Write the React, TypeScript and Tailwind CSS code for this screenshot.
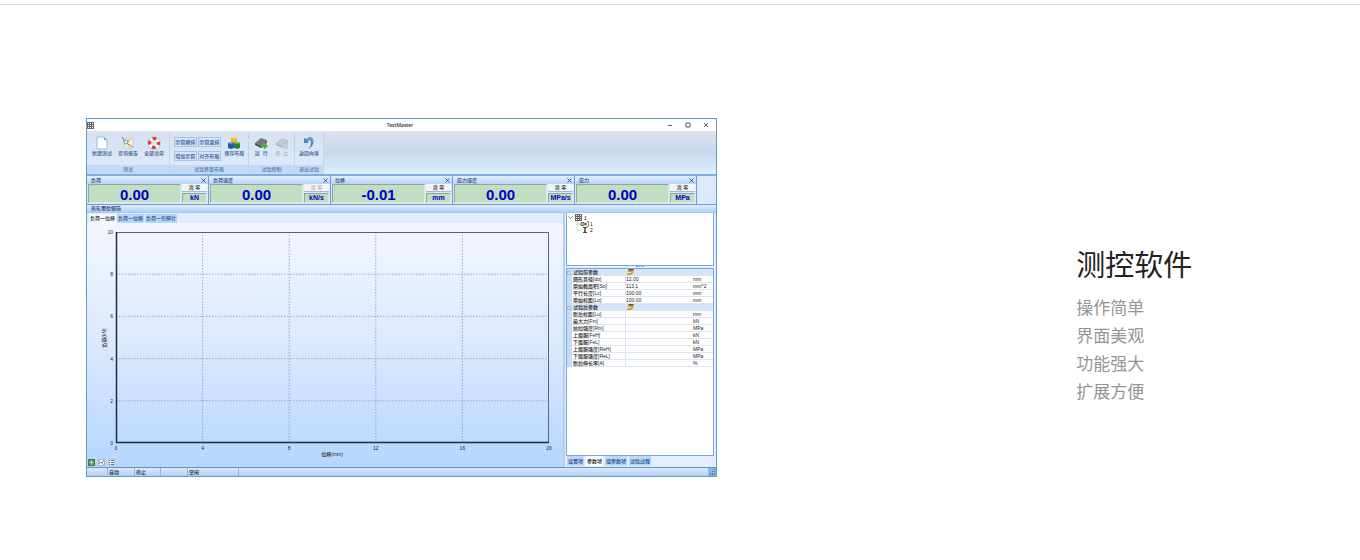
import { useState } from 'react';
import type { ReactNode } from 'react';

const gauges = [
  { name: '负荷', value: '0.00', unit: 'kN' },
  { name: '负荷速度', value: '0.00', unit: 'kN/s', disabled: true },
  { name: '位移', value: '-0.01', unit: 'mm' },
  { name: '应力速度', value: '0.00', unit: 'MPa/s' },
  { name: '应力', value: '0.00', unit: 'MPa' },
];

const paramRows = [
  { label: '试验前参数', group: true },
  { label: '圆形直径[do]', value: '12.00', unit: 'mm' },
  { label: '原始截面积[So]', value: '113.1', unit: 'mm^2' },
  { label: '平行长度[Lc]', value: '100.00', unit: 'mm' },
  { label: '原始标距[Lo]', value: '100.00', unit: 'mm' },
  { label: '试验后参数', group: true },
  { label: '断后标距[Lu]', unit: 'mm' },
  { label: '最大力[Fm]', unit: 'kN' },
  { label: '抗拉强度[Rm]', unit: 'MPa' },
  { label: '上屈服[FeH]', unit: 'kN' },
  { label: '下屈服[FeL]', unit: 'kN' },
  { label: '上屈服强度[ReH]', unit: 'MPa' },
  { label: '下屈服强度[ReL]', unit: 'MPa' },
  { label: '断后伸长率[A]', unit: '%' },
];

const chartTabs = ['负荷一位移', '负荷一位移', '负荷一引伸计'];
const paramTabs = ['设置项', '参数项', '组参数项', '试验过程'];
const features = ['操作简单', '界面美观', '功能强大', '扩展方便'];

const GridIcon = () => (
  <svg viewBox="0 0 7 7" className="h-[7px] w-[7px]">
    <rect width="7" height="7" fill="#666" />
    <path d="M1 1h1v1H1zM3 1h1v1H3zM5 1h1v1H5zM1 3h1v1H1zM3 3h1v1H3zM5 3h1v1H5zM1 5h1v1H1zM3 5h1v1H3zM5 5h1v1H5z" fill="#eee" />
  </svg>
);

const NewIcon = () => (
  <svg viewBox="0 0 14 14" className="h-3.5 w-3.5">
    <path d="M2 1h7l3 3v9H2z" fill="#fbfdff" stroke="#8fabd0" strokeWidth=".8" />
    <path d="M9 1v3h3z" fill="#75a5dc" />
  </svg>
);

const ReportIcon = () => (
  <svg viewBox="0 0 14 14" className="h-3.5 w-3.5">
    <path d="M3 2.5l9-1v11l-8 .5z" fill="#f7f7f2" stroke="#b8b8b0" strokeWidth=".6" />
    <path d="M1 1l4 3 7-2-5 5z" fill="#e5c76b" />
    <path d="M1 1l3 5M5 7l7 4" stroke="#626873" strokeWidth=".8" />
    <circle cx="5" cy="6" r="2" fill="#dbe7f1" stroke="#777" strokeWidth=".7" />
    <path d="M7 9h3M6 11h4" stroke="#d9a43a" strokeWidth=".8" />
  </svg>
);

const RingIcon = () => (
  <svg viewBox="0 0 14 14" className="h-3.5 w-3.5">
    <circle cx="7" cy="7" r="4.5" fill="none" stroke="#fff" strokeWidth="3.2" />
    <circle cx="7" cy="7" r="4.5" fill="none" stroke="#d8392c" strokeWidth="3.2" strokeDasharray="3.9 3.17" strokeDashoffset="1.95" />
    <circle cx="7" cy="7" r="6.2" fill="none" stroke="#c98f90" strokeWidth=".5" />
  </svg>
);

const CubesIcon = () => (
  <svg viewBox="0 0 14 14" className="h-3.5 w-3.5">
    <path d="M4 2l3-1 3 1v4L7 7 4 6z" fill="#e8b91f" />
    <path d="M4 2l3-1 3 1-3 1z" fill="#ffe16c" />
    <path d="M1 7l3-1 3 1v5l-3 1-3-1z" fill="#2359b5" />
    <path d="M1 7l3-1 3 1-3 1z" fill="#6da5eb" />
    <path d="M7 7l3-1 3 1v5l-3 1-3-1z" fill="#278739" />
    <path d="M7 7l3-1 3 1-3 1z" fill="#75c46a" />
  </svg>
);

const RunIcon = () => (
  <svg viewBox="0 0 14 14" className="h-3.5 w-3.5">
    <path d="M1 7l6-5 6 2-6 6z" fill="#777" />
    <path d="M1 7l6 3v2L1 9z" fill="#444" />
    <path d="M7 10l6-6v3l-6 5z" fill="#5d5d5d" />
    <path d="M7 8h3v-2l4 4-4 3.500v-2H7z" fill="#4bae3f" />
  </svg>
);

const StopIcon = () => (
  <svg viewBox="0 0 14 14" className="h-3.5 w-3.5">
    <path d="M1 7l6-5 6 2-6 6z" fill="#bfc8d4" />
    <path d="M1 7l6 3v2L1 9z" fill="#a9b4c3" />
    <path d="M7 10l6-6v3l-6 5z" fill="#b3bdca" />
    <path d="M8 8h5v5H8z" fill="#c6ced9" />
  </svg>
);

const BackIcon = () => (
  <svg viewBox="0 0 14 14" className="h-3.5 w-3.5">
    <path d="M4 3c4-3 8-2 7.500 3-.3 3-2 5-5 7 1.500-2.500 3-5 2.500-7.500-.4-1.600-2-1.500-3.500 0L7 7H2V2z" fill="#4a82c4" />
    <path d="M4.500 3.800c3-2.300 6-2 6 2" fill="none" stroke="#a7caee" strokeWidth=".7" />
  </svg>
);

const HandIcon = () => (
  <svg viewBox="0 0 8 6" className="block h-1.5 w-2">
    <path d="M2.500 0h5v3L5.500 6H1V2.500h1.500z" fill="#c9a545" />
    <path d="M2.500 0h5v1.500h-5z" fill="#5f5638" />
    <path d="M1 3h4v1H1z" fill="#fff0a5" />
  </svg>
);

const RibbonButton = ({ icon, label, disabled }: { icon: ReactNode; label: string; disabled?: boolean }) => (
  <button
    disabled={disabled}
    className="flex flex-col items-center whitespace-pre pt-[3px] text-[#3c5e95] disabled:text-[#a3afc1]"
  >
    {icon}
    <span>{label}</span>
  </button>
);

const RibbonGroup = ({ title, width, children }: { title: string; width: string; children: ReactNode }) => (
  <div className={`flex shrink-0 flex-col border-r border-[#c4d4e8] bg-gradient-to-b from-[#d6e2f2] to-[#dcebfa] ${width}`}>
    <div className="flex h-8 items-start justify-around px-0.5">{children}</div>
    <div className="h-[9px] bg-[#c3daf4] text-center leading-[9px] text-[#5279b2]">{title}</div>
  </div>
);

const SmallButton = ({ label }: { label: string }) => (
  <button className="h-[10px] w-[23px] whitespace-nowrap border border-[#a8c2e3] bg-[#d4e4f7] leading-[8px] text-[#2d5396]">
    {label}
  </button>
);

const Gauge = ({ name, value, unit, disabled }: { name: string; value: string; unit: string; disabled?: boolean }) => (
  <div className="border-r border-[#6e9dcc]">
    <div className="flex h-2 items-center justify-between bg-gradient-to-b from-[#e2efff] to-[#b5d4fb] pl-1 pr-0.5 text-[#243f72]">
      <span>{name}</span>
      <button aria-label={`关闭 ${name}`}>
        <svg viewBox="0 0 5 5" className="h-[5px] w-[5px]">
          <path d="M.5 .5l4 4M4.500 .5l-4 4" stroke="#243b6b" strokeWidth=".8" />
        </svg>
      </button>
    </div>
    <div className="flex h-5 gap-px bg-[#dce9f9] px-px pb-px">
      <div className="h-[19px] flex-1 border border-b-[#dfe8e2] border-l-[#8fa79b] border-r-[#dfe8e2] border-t-[#8fa79b] bg-[#c0dec0] text-center text-[15px] font-bold leading-[19px] text-[#0000c8]">
        {value}
      </div>
      <div className="flex w-[25px] flex-col gap-px">
        <button
          disabled={disabled}
          className="h-2 whitespace-pre border-b border-[#aab8c8] bg-[#f2f5f8] leading-[7px] text-[#222] disabled:text-[#aaa]"
        >
          清 零
        </button>
        <div className="h-[10px] border border-b-[#dfe8e2] border-l-[#8fa79b] border-r-[#dfe8e2] border-t-[#8fa79b] bg-[#c0dec0] text-center text-[7px] font-bold leading-[8px] text-[#0000c8]">
          {unit}
        </div>
      </div>
    </div>
  </div>
);

const Chart = () => {
  const x = (v: number) => 29 + (v / 20) * 433;
  const y = (v: number) => 220 - (v / 10) * 211;
  return (
    <svg viewBox="0 0 476 236" className="block w-full" fill="#222" fontSize="5">
      {[4, 8, 12, 16].map((v) => (
        <line key={v} x1={x(v)} x2={x(v)} y1="9" y2="220" stroke="#8e99ab" strokeWidth=".8" strokeDasharray="1.500 1.500" />
      ))}
      {[2, 4, 6, 8].map((v) => (
        <line key={v} x1="29" x2="462" y1={y(v)} y2={y(v)} stroke="#8e99ab" strokeWidth=".8" strokeDasharray="1.500 1.500" />
      ))}
      <path d="M29 9.500H461.500V220" fill="none" stroke="#596273" />
      <path d="M29.500 9V219.500H462" fill="none" stroke="#222b3a" strokeWidth="1.500" />
      {[0, 4, 8, 12, 16, 20].map((v) => (
        <text key={v} x={x(v)} y="227" textAnchor="middle">
          {v}
        </text>
      ))}
      {[0, 2, 4, 6, 8, 10].map((v) => (
        <text key={v} x="26" y={y(v) + 2} textAnchor="end">
          {v}
        </text>
      ))}
      <text x="245" y="233" textAnchor="middle">
        位移(mm)
      </text>
      <text transform="translate(19 115) rotate(-90)" textAnchor="middle">
        负荷(kN)
      </text>
    </svg>
  );
};

const ParamTable = () => (
  <table className="w-full table-fixed border-separate border-spacing-0 text-left">
    <colgroup>
      <col className="w-[5px]" />
      <col className="w-[53px]" />
      <col />
      <col className="w-5" />
    </colgroup>
    <tbody>
      {paramRows.map((row) => (
        <tr key={row.label} className={row.group ? 'h-[7px] bg-[#d3e5fa]' : 'h-[7px]'}>
          <td className="bg-[#c6dcf6] p-0">
            {row.group && (
              <svg viewBox="0 0 4 4" className="block h-1 w-1">
                <path d="M.5 .5h3v3h-3zM1 2h2" fill="#fff" stroke="#7898c0" strokeWidth=".6" />
              </svg>
            )}
          </td>
          <th className="whitespace-nowrap border-b border-[#dde6f0] p-0 pl-px font-medium leading-[6px] text-[#222]">
            {row.label}
          </th>
          <td className="border-b border-l border-[#dde6f0] p-0 leading-[6px]">
            {row.group ? <HandIcon /> : row.value}
          </td>
          <td className="whitespace-nowrap border-b border-[#dde6f0] p-0 leading-[6px]">{row.unit}</td>
        </tr>
      ))}
    </tbody>
  </table>
);

const Ribbon = () => (
  <div className="flex h-[43px] bg-gradient-to-b from-[#dce1f0] via-[#c8d9ec] to-[#dcf0fd] pt-0.5">
    <RibbonGroup title="测试" width="w-[83px]">
      <RibbonButton icon={<NewIcon />} label="新建测试" />
      <RibbonButton icon={<ReportIcon />} label="查询报告" />
      <RibbonButton icon={<RingIcon />} label="全部清零" />
    </RibbonGroup>
    <RibbonGroup title="试验界面布局" width="w-[79px]">
      <div className="grid grid-cols-2 gap-x-px gap-y-1 pt-1">
        <SmallButton label="示窗横排" />
        <SmallButton label="示窗竖排" />
        <SmallButton label="增加示窗" />
        <SmallButton label="对齐布局" />
      </div>
      <RibbonButton icon={<CubesIcon />} label="保存布局" />
    </RibbonGroup>
    <RibbonGroup title="试验控制" width="w-[46px]">
      <RibbonButton icon={<RunIcon />} label="运  行" />
      <RibbonButton icon={<StopIcon />} label="停  止" disabled />
    </RibbonGroup>
    <RibbonGroup title="退出试验" width="w-[29px]">
      <RibbonButton icon={<BackIcon />} label="返回向导" />
    </RibbonGroup>
  </div>
);

const TestMaster = () => {
  const [chartTab, setChartTab] = useState(0);
  const [paramTab, setParamTab] = useState(1);

  return (
    <div className="border border-[#5d9ccc] bg-[#dbe9fb] font-['Liberation_Sans','Noto_Sans_CJK_SC',sans-serif] text-[5px] font-medium leading-[6px] text-[#222]">
      {/* Title bar */}
      <div className="flex h-3 items-center bg-white">
        <div className="flex-1">
          <GridIcon />
        </div>
        <span className="pl-1 font-['Noto_Sans',sans-serif]">TestMaster</span>
        <div className="flex flex-1 justify-end gap-3 pr-[7px]">
          <button aria-label="最小化">
            <svg viewBox="0 0 6 6" className="h-1.5 w-1.5"><path d="M1 3.500h4" stroke="#333" strokeWidth=".8" /></svg>
          </button>
          <button aria-label="最大化">
            <svg viewBox="0 0 6 6" className="h-1.5 w-1.5"><path d="M1 1h4v4H1z" fill="none" stroke="#333" strokeWidth=".8" /></svg>
          </button>
          <button aria-label="关闭">
            <svg viewBox="0 0 6 6" className="h-1.5 w-1.5"><path d="M1 1l4 4M5 1L1 5" stroke="#333" strokeWidth=".8" /></svg>
          </button>
        </div>
      </div>

      <Ribbon />

      {/* Live readings */}
      <div className="grid grid-cols-[repeat(5,122fr)_19fr] border-b border-t-2 border-b-[#6e9dcc] border-t-[#7eb0df]">
        {gauges.map((gauge) => (
          <Gauge key={gauge.name} {...gauge} />
        ))}
      </div>

      <div className="h-2 border-b border-[#a5c8ee] bg-gradient-to-b from-[#e0eeff] to-[#aed0fa] pl-1 leading-[7px] text-[#243f72]">
        热轧带肋钢筋
      </div>

      <div className="flex">
        {/* Chart */}
        <div className="flex min-w-0 flex-1 flex-col bg-gradient-to-b from-[#f5f7ff] via-[#dce9fe] to-[#b5d6ff]">
          <div className="flex h-[10px] items-end gap-px bg-[#e1edfd] pl-0.5">
            {chartTabs.map((tab, i) => (
              <button
                key={i}
                onClick={() => setChartTab(i)}
                className={`h-[9px] px-px leading-[9px] ${
                  chartTab === i ? 'bg-[#f5f9ff] text-[#222]' : 'bg-[#b9d5f8] text-[#1f4a8d]'
                }`}
              >
                {tab}
              </button>
            ))}
          </div>
          <Chart />
          <div className="flex h-2 gap-[3px] pl-px">
            <button aria-label="表格" className="h-[7px] w-[7px] border border-[#3c7740] bg-[#5d9d61]">
              <svg viewBox="0 0 5 5" className="block h-[5px] w-[5px]"><path d="M2.500 0v5M0 2.500h5" stroke="#d2ead3" strokeWidth=".6" /></svg>
            </button>
            <button aria-label="曲线" className="h-[7px] w-[7px] border border-[#a8b4c6] bg-white">
              <svg viewBox="0 0 5 5" className="block h-[5px] w-[5px]"><path d="M0 4l2-2 1 1 2-3" fill="none" stroke="#c33f58" strokeWidth=".8" /><path d="M0 1l5 4" stroke="#4a6fc0" strokeWidth=".6" /></svg>
            </button>
            <button aria-label="列表" className="h-[7px] w-[7px] border border-[#c3cad5] bg-[#eef0f4]">
              <svg viewBox="0 0 5 5" className="block h-[5px] w-[5px]"><path d="M0 .5h1M2 .5h3M0 2.500h1M2 2.500h3M0 4.500h1M2 4.500h3" stroke="#5d6675" strokeWidth=".9" /></svg>
            </button>
          </div>
        </div>

        {/* Parameters */}
        <div className="flex w-[153px] shrink-0 flex-col border-l-2 border-[#b3cff3] bg-[#e3effe] pl-px pr-0.5">
          <div className="h-[53px] border-x border-b border-[#7ba7d5] bg-white pl-px pt-px">
            <div className="flex items-center gap-0.5">
              <svg viewBox="0 0 5 5" className="h-[5px] w-[5px]"><path d="M.5 1.500l2 2 2-2" fill="none" stroke="#444" strokeWidth=".7" /></svg>
              <GridIcon />
              1
            </div>
            <div className="ml-2 flex items-center">
              <svg viewBox="0 0 14 6" className="h-1.5 w-3.5">
                <path d="M1 0v6M1 3h4" stroke="#aaa" strokeWidth=".5" />
                <path d="M5 1.500h3v3H5z" fill="#c6dc84" stroke="#445533" strokeWidth=".8" />
                <path d="M8 3h2M10 1.500v3" stroke="#333" />
                <path d="M11 .5h1.500v5H11" fill="none" stroke="#a64b43" strokeWidth=".8" />
              </svg>
              1
            </div>
            <div className="ml-2 flex items-center">
              <svg viewBox="0 0 14 6" className="h-1.5 w-3.5">
                <path d="M1 0v3h4" fill="none" stroke="#aaa" strokeWidth=".5" />
                <path d="M7 .5h4M9 .5v5M7 5.500h4M8 2h2M8 4h2" stroke="#333" strokeWidth=".9" />
              </svg>
              2
            </div>
          </div>
          <div className="flex h-0.5 justify-center">
            <div className="w-2 border-t border-dotted border-[#7898c0]" />
          </div>
          <div className="flex-1 border border-[#7ba7d5] bg-white">
            <ParamTable />
          </div>
          <div className="flex h-[11px] gap-0.5 pl-px">
            {paramTabs.map((tab, i) => (
              <button
                key={tab}
                onClick={() => setParamTab(i)}
                className={`h-[10px] px-px leading-[10px] ${
                  paramTab === i ? 'bg-white text-[#111]' : 'bg-[#bcd7f8] text-[#1f4a8d]'
                }`}
              >
                {tab}
              </button>
            ))}
          </div>
        </div>
      </div>

      {/* Status bar */}
      <div className="flex h-[9px] border-t border-[#5d93c9] bg-gradient-to-b from-[#d9e9fc] to-[#b3d0f4] leading-[8px]">
        <span className="w-[21px] border-r border-[#93b3d8]" />
        <span className="w-[27px] border-r border-[#93b3d8] pl-px">自动</span>
        <span className="w-[26px] border-r border-[#93b3d8] pl-px">停止</span>
        <span className="w-[27px] border-r border-[#93b3d8]" />
        <span className="w-[51px] border-r border-[#93b3d8] pl-px">空闲</span>
        <svg viewBox="0 0 8 8" className="ml-auto h-2 w-2">
          <rect width="8" height="8" fill="#8db6e6" />
          <path d="M6 1h1v1H6zM4 3h1v1H4zM6 3h1v1H6zM2 5h1v2H2zM4 5h1v2H4zM6 5h1v2H6z" fill="#4377b5" />
        </svg>
      </div>
    </div>
  );
};

export default function App() {
  return (
    <div className="min-h-screen bg-white pt-1" lang="zh-CN">
      <section className="grid grid-cols-[631fr_557fr] items-start border-t border-[#dcdcdc] px-[86px] pb-20 pt-[113px]">
        <TestMaster />
        <div className="pl-[64.5%] pt-[127px] font-['Noto_Sans_CJK_SC',sans-serif]">
          <h2 className="text-[29px] leading-9 text-[#222]">测控软件</h2>
          <ul className="mt-3 text-[17px] leading-7 text-[#949494]">
            {features.map((feature) => (
              <li key={feature}>{feature}</li>
            ))}
          </ul>
        </div>
      </section>
    </div>
  );
}
